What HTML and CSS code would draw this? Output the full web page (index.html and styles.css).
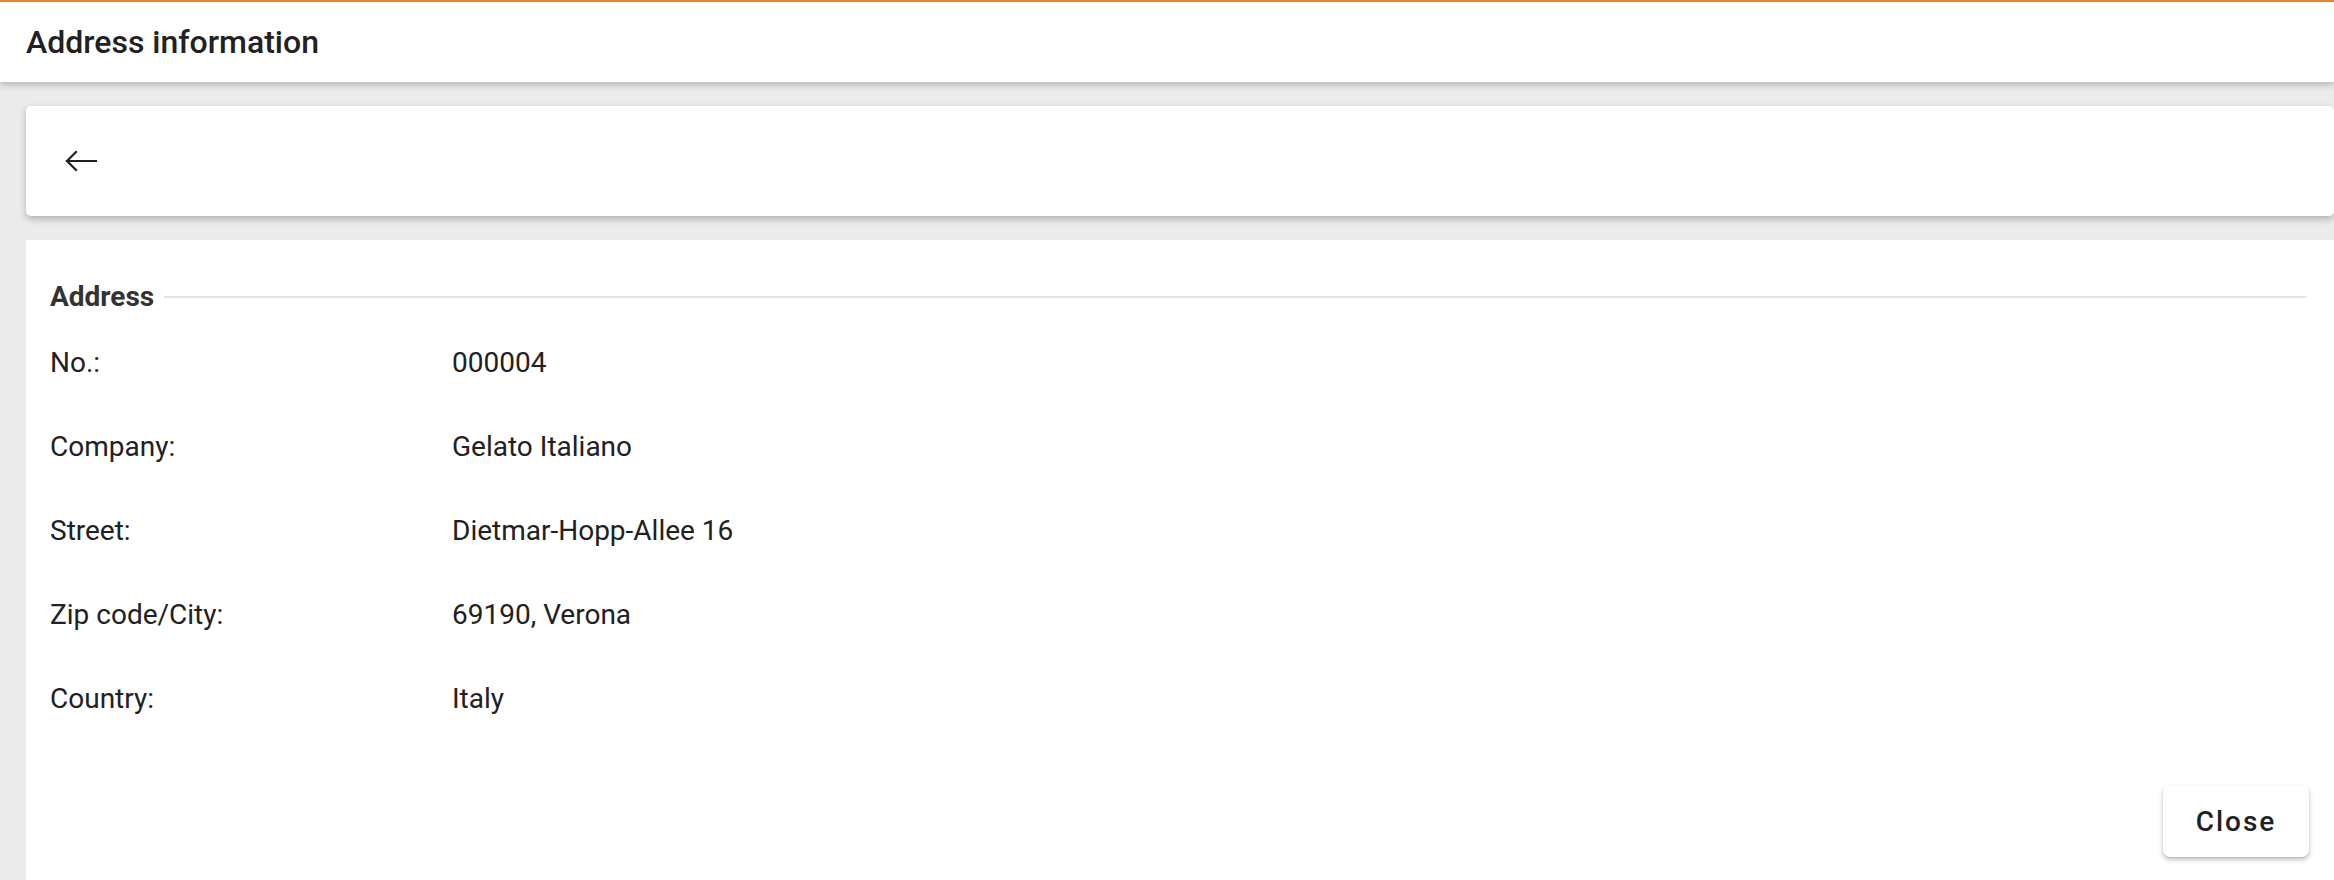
FILE: index.html
```html
<!DOCTYPE html>
<html lang="en">
<head>
    <meta charset="UTF-8">
    <title>Address information</title>
    <link rel="stylesheet" href="styles.css">
</head>
<body>
    <header class="topbar">
        <h1 class="title">Address information</h1>
    </header>

    <main class="content">
        <div class="toolbar">
            <button class="back" title="Back">
                <svg width="34" height="22" viewBox="0 0 34 22" fill="none" stroke="#212121" stroke-width="2.2" stroke-linecap="square">
                    <path d="M32 11H3"/>
                    <path d="M12 2L3 11L12 20"/>
                </svg>
            </button>
        </div>

        <section class="details">
            <div class="section-head">
                <span>Address</span>
                <div class="rule"></div>
            </div>

            <div class="row">
                <div class="label">No.:</div>
                <div class="value">000004</div>
            </div>
            <div class="row">
                <div class="label">Company:</div>
                <div class="value">Gelato Italiano</div>
            </div>
            <div class="row">
                <div class="label">Street:</div>
                <div class="value">Dietmar-Hopp-Allee 16</div>
            </div>
            <div class="row">
                <div class="label">Zip code/City:</div>
                <div class="value">69190, Verona</div>
            </div>
            <div class="row">
                <div class="label">Country:</div>
                <div class="value">Italy</div>
            </div>

            <div class="actions">
                <button class="close">Close</button>
            </div>
        </section>
    </main>
</body>
</html>
```

FILE: styles.css
```css
body {
    margin: 0;
    background-color: #ebebeb;
    font-family: Roboto, "Liberation Sans", sans-serif;
    color: #212121;
    overflow: hidden;
}

.topbar {
    height: 80px;
    border-top: 2px solid #e4822e;
    background: #fff;
    display: flex;
    align-items: center;
    padding-left: 26px;
    box-shadow: 0 2px 8px rgba(0, 0, 0, 0.28);
    position: relative;
    z-index: 2;
}

.title {
    margin: 0;
    font-size: 32px;
    font-weight: 500;
    color: #212121;
}

.content {
    padding: 24px 0 0 26px;
}

.toolbar {
    height: 110px;
    background: #fff;
    border-radius: 5px;
    display: flex;
    align-items: center;
    padding-left: 38px;
    box-shadow: 0 3px 7px rgba(0, 0, 0, 0.25);
}

.back {
    border: none;
    background: none;
    padding: 0;
    display: flex;
    cursor: pointer;
}

.details {
    margin-top: 24px;
    background: #fff;
    padding: 41px 25px 0 24px;
    min-height: 700px;
}

/* Section heading with line */
.section-head {
    display: flex;
    align-items: center;
    gap: 10px;
    height: 32px;
    line-height: 32px;
    font-size: 28px;
    font-weight: 700;
    color: #333;
    margin-right: 3px;
    margin-bottom: 8px;
}

.rule {
    flex: 1;
    height: 2px;
    background: #e2e2e2;
}

.row {
    display: flex;
    height: 84px;
    line-height: 84px;
    font-size: 28px;
}

.label {
    width: 402px;
}

.actions {
    display: flex;
    justify-content: flex-end;
    margin-top: 44px;
}

.close {
    width: 146px;
    height: 72px;
    border: none;
    border-radius: 7px;
    background: #fff;
    font-family: Roboto, "Liberation Sans", sans-serif;
    font-size: 28px;
    font-weight: 500;
    letter-spacing: 2px;
    color: #212121;
    cursor: pointer;
    box-shadow: 0 3px 5px rgba(0, 0, 0, 0.22), 0 1px 2px rgba(0, 0, 0, 0.12);
}
```
